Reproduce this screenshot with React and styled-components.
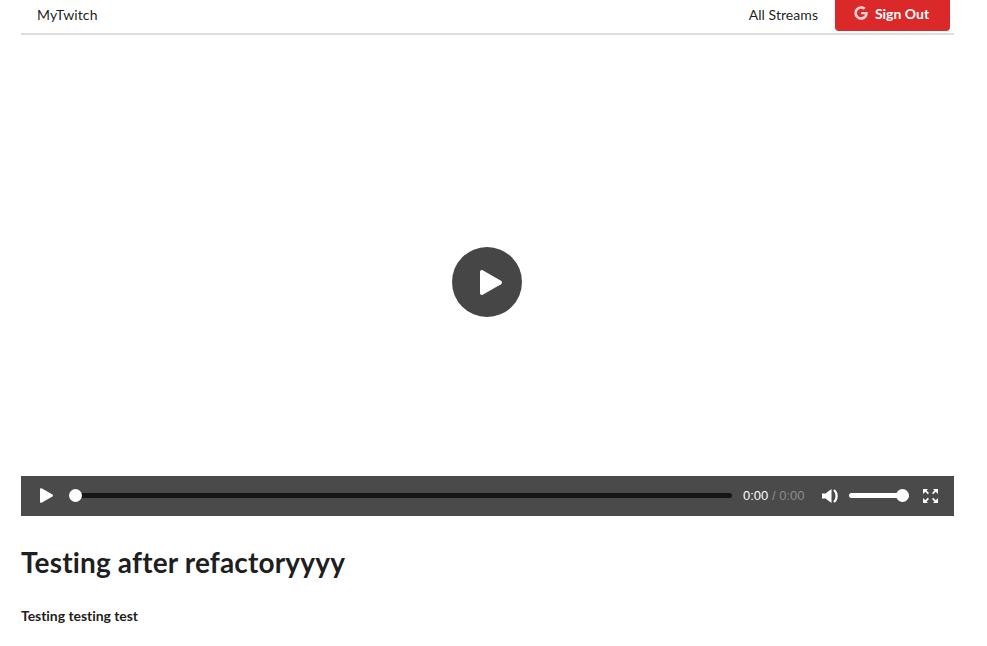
import React from "react";
import styled, { createGlobalStyle } from "styled-components";

const GlobalStyle = createGlobalStyle`
  * {
    margin: 0;
    padding: 0;
    box-sizing: border-box;
  }
  html, body {
    background: #fff;
    overflow: hidden;
  }
  body {
    font-family: Lato, "Helvetica Neue", Arial, sans-serif;
    font-size: 14px;
    font-variant-ligatures: none;
    color: rgba(0, 0, 0, 0.9);
  }
`;

const Page = styled.div`
  width: 933px;
  margin-left: 21px;
`;

const Nav = styled.nav`
  height: 35px;
  display: flex;
  align-items: flex-start;
  justify-content: space-between;
  border-bottom: 2px solid rgba(34, 36, 38, 0.15);
  padding: 0 4px 0 16px;
`;

const Brand = styled.a`
  font-size: 14px;
  line-height: 30px;
  letter-spacing: 0.1px;
`;

const NavRight = styled.div`
  display: flex;
  align-items: flex-start;
  gap: 17px;
`;

const NavLink = styled.a`
  font-size: 14px;
  line-height: 30px;
  letter-spacing: 0.05px;
`;

const SignOut = styled.button`
  width: 115px;
  height: 31px;
  display: flex;
  align-items: center;
  justify-content: center;
  gap: 7px;
  padding: 0 2px 5px 0;
  border: none;
  border-radius: 0 0 4px 4px;
  background: #db2828;
  color: #fff;
  font-family: Lato, sans-serif;
  font-size: 14px;
  font-weight: 700;
`;

const Player = styled.div`
  position: relative;
  height: 468px;
  margin-top: 13px;
  display: flex;
  flex-direction: column;
  justify-content: flex-end;
`;

const BigPlay = styled.div`
  position: absolute;
  left: 431px;
  top: 199px;
  width: 70px;
  height: 70px;
  border-radius: 50%;
  background: #464646;
  display: flex;
  align-items: center;
  justify-content: center;
  padding-left: 8px;
`;

const Controls = styled.div`
  height: 40px;
  background: #4a4a4a;
  display: flex;
  align-items: center;
  padding: 0 16px 1px 19px;
  color: #fff;
`;

const Track = styled.div`
  position: relative;
  height: 5px;
  border-radius: 3px;
  background: ${(p) => p.$color};
  width: ${(p) => p.$width}px;
  margin-left: ${(p) => p.$left}px;
`;

const Thumb = styled.span`
  position: absolute;
  top: -4px;
  left: ${(p) => p.$left}px;
  width: 13px;
  height: 13px;
  border-radius: 50%;
  background: #fff;
`;

const Time = styled.div`
  margin-left: 11px;
  width: 62px;
  font-family: "Liberation Sans", Arial, sans-serif;
  font-size: 13px;
  white-space: nowrap;
  color: #fff;
`;

const TimeTotal = styled.span`
  color: #8e8e8e;
`;

const IconBox = styled.div`
  display: flex;
  margin-left: ${(p) => p.$left}px;
`;

const Title = styled.h1`
  margin-top: 28px;
  font-size: 28px;
  line-height: 36px;
  font-weight: 700;
  letter-spacing: 0.16px;
`;

const Description = styled.h4`
  margin-top: 27px;
  font-size: 14px;
  line-height: 18px;
  font-weight: 700;
  letter-spacing: -0.05px;
`;

const GoogleIcon = () => (
  <svg width="14" height="14" viewBox="0 0 488 512" fill="#fff" fillOpacity="0.8">
    <path d="M488 261.8C488 403.3 391.1 504 248 504 110.8 504 0 393.2 0 256S110.8 8 248 8c66.8 0 123 24.5 166.3 64.9l-67.5 64.9C258.5 52.6 94.3 116.6 94.3 256c0 86.5 69.1 156.6 153.7 156.6 98.2 0 135-70.4 140.8-106.9H248v-85.3h236.1c2.3 12.7 3.9 24.9 3.9 41.4z" />
  </svg>
);

const PlayIcon = ({ width, height }) => (
  <svg width={width} height={height} viewBox="0 0 22 25" fill="#fff">
    <path d="M0 2C0 .5 1.400-.4 2.700.3l18.300 10.400c1.300.8 1.300 2.800 0 3.600L2.700 24.700C1.400 25.400 0 24.500 0 23z" />
  </svg>
);

const VolumeIcon = () => (
  <svg width="17" height="14" viewBox="0 0 17 14" fill="#fff">
    <path d="M0 4.500h3.500L9.500 0v14L3.500 9.500H0z" />
    <path d="M12 1c3.500 3 3.500 9 0 12" fill="none" stroke="#fff" strokeWidth="2.200" />
  </svg>
);

const FullscreenIcon = () => (
  <svg width="15" height="14" viewBox="0 0 15 14" fill="#fff">
    <path d="M0 0h5L3.500 1.500 6 4 4.800 5.200 2.300 2.700 0 5z" />
    <path d="M15 0h-5l1.500 1.500L9 4l1.200 1.200 2.500-2.500L15 5z" />
    <path d="M0 14h5l-1.500-1.500L6 10 4.800 8.800l-2.500 2.500L0 9z" />
    <path d="M15 14h-5l1.500-1.500L9 10l1.200-1.200 2.500 2.500L15 9z" />
  </svg>
);

export default function App() {
  return (
    <Page>
      <GlobalStyle />
      <Nav>
        <Brand>MyTwitch</Brand>
        <NavRight>
          <NavLink>All Streams</NavLink>
          <SignOut>
            <GoogleIcon />
            Sign Out
          </SignOut>
        </NavRight>
      </Nav>
      <Player>
        <BigPlay>
          <PlayIcon width={22} height={25} />
        </BigPlay>
        <Controls>
          <PlayIcon width={13} height={15} />
          <Track $color="#161616" $width={660} $left={19}>
            <Thumb $left={-3} />
          </Track>
          <Time>
            0:00 <TimeTotal>/ 0:00</TimeTotal>
          </Time>
          <IconBox $left={17}>
            <VolumeIcon />
          </IconBox>
          <Track $color="#fff" $width={60} $left={10}>
            <Thumb $left={47} />
          </Track>
          <IconBox $left={14}>
            <FullscreenIcon />
          </IconBox>
        </Controls>
      </Player>
      <Title>Testing after refactoryyyy</Title>
      <Description>Testing testing test</Description>
    </Page>
  );
}
